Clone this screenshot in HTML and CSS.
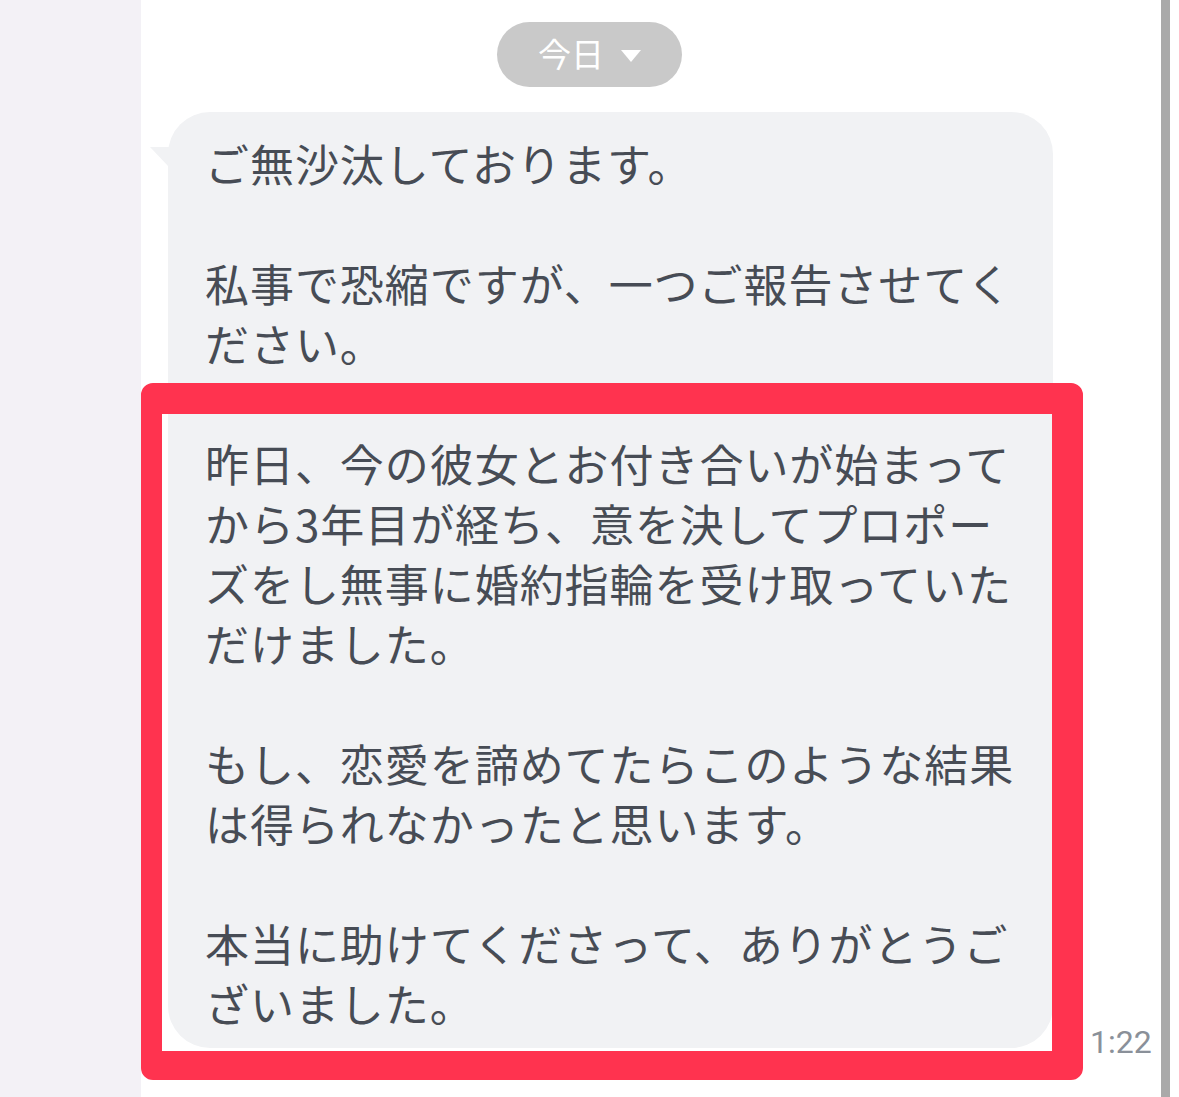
FILE: index.html
```html
<!DOCTYPE html>
<html lang="ja">
<head>
<meta charset="utf-8">
<link rel="stylesheet" href="styles.css">
</head>
<body>
<div class="screen">
  <div class="side"></div>
  <main class="chat">
    <div class="date-row">
      <div class="date-pill"><span class="date-text">今日</span><span class="caret"></span></div>
    </div>
    <div class="msg-row">
      <div class="bubble">
        <p>ご無沙汰しております。</p>
        <p>私事で恐縮ですが、一つご報告させてく<br>ださい。</p>
        <p>昨日、今の彼女とお付き合いが始まって<br>から3年目が経ち、意を決してプロポー<br>ズをし無事に婚約指輪を受け取っていた<br>だけました。</p>
        <p>もし、恋愛を諦めてたらこのような結果<br>は得られなかったと思います。</p>
        <p>本当に助けてくださって、ありがとうご<br>ざいました。</p>
      </div>
      <span class="time">1:22</span>
    </div>
  </main>
  <div class="scrollbar"></div>
  <div class="edge"></div>
  <div class="highlight"></div>
</div>
</body>
</html>
```

FILE: styles.css
```css
html, body {
  margin: 0;
  padding: 0;
  background: #ffffff;
}
.screen {
  position: relative;
  display: flex;
  width: 1179px;
  height: 1097px;
  overflow: hidden;
  font-family: "Noto Sans CJK JP", "Noto Sans", sans-serif;
}
.side {
  width: 141px;
  flex: none;
  background: #f3f1f6;
}
.chat {
  flex: 1;
  background: #ffffff;
  padding-top: 22px;
}
.scrollbar {
  width: 9px;
  flex: none;
  background: #a9a9a9;
}
.edge {
  width: 9px;
  flex: none;
  background: #ffffff;
}
.date-row {
  display: flex;
  padding-left: 356px;
}
.date-pill {
  width: 185px;
  height: 65px;
  border-radius: 33px;
  background: #c9c9c9;
  display: flex;
  align-items: center;
  justify-content: center;
  gap: 17px;
  box-sizing: border-box;
  padding-left: 0;
}
.date-text {
  color: #ffffff;
  font-size: 33px;
  line-height: 1;
  margin-top: -2px;
}
.caret {
  width: 0;
  height: 0;
  border-left: 10px solid transparent;
  border-right: 10px solid transparent;
  border-top: 12px solid #ffffff;
  margin-top: 2px;
}
.msg-row {
  display: flex;
  align-items: flex-end;
  margin-top: 25px;
  padding-left: 27px;
}
.bubble {
  position: relative;
  width: 885px;
  box-sizing: border-box;
  background: #f1f2f4;
  border-radius: 42px;
  padding: 21px 10px 15px 37px;
  color: #474c55;
  font-size: 44px;
  line-height: 60px;
  letter-spacing: 0.95px;
  white-space: nowrap;
}
.bubble::before {
  content: "";
  position: absolute;
  left: -18px;
  top: 35px;
  width: 22px;
  height: 19px;
  background: #f1f2f4;
  clip-path: polygon(0 0, 100% 0, 100% 100%, 82% 100%);
}
.bubble p {
  margin: 0 0 60px 0;
}
.bubble p:last-child {
  margin-bottom: 0;
}
.time {
  margin-left: 37px;
  margin-bottom: -12px;
  font-family: Roboto, "Noto Sans", sans-serif;
  font-size: 32px;
  line-height: 36px;
  color: #8a9099;
}
.highlight {
  position: absolute;
  left: 141px;
  top: 383px;
  width: 942px;
  height: 697px;
  box-sizing: border-box;
  border-style: solid;
  border-color: #ff334f;
  border-width: 31px 31px 29px 21px;
  border-radius: 12px;
  pointer-events: none;
}
```
